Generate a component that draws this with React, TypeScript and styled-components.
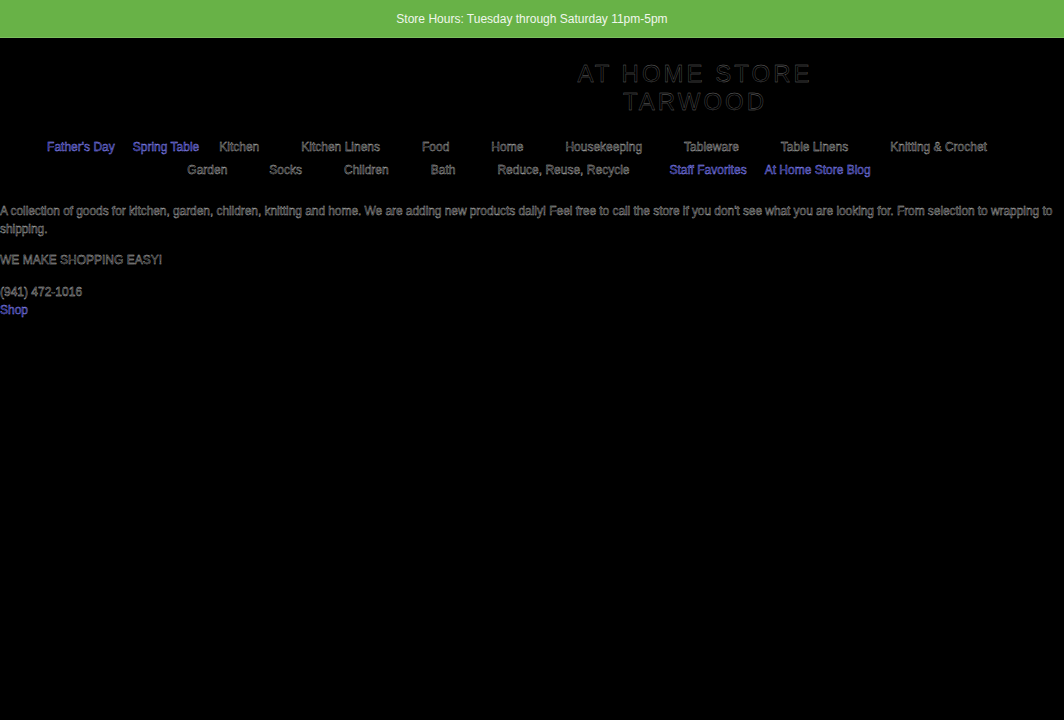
import React from 'react';
import styled, { createGlobalStyle } from 'styled-components';

interface NavItem {
  label: string;
  href: string;
  menu?: boolean;
}

const topNav: NavItem[] = [
  { label: "Father's Day", href: '#fathers-day' },
  { label: 'Spring Table', href: '#spring-table' },
  { label: 'Kitchen', href: '#kitchen', menu: true },
  { label: 'Kitchen Linens', href: '#kitchen-linens', menu: true },
  { label: 'Food', href: '#food', menu: true },
  { label: 'Home', href: '#home', menu: true },
  { label: 'Housekeeping', href: '#housekeeping', menu: true },
  { label: 'Tableware', href: '#tableware', menu: true },
  { label: 'Table Linens', href: '#table-linens', menu: true },
  { label: 'Knitting & Crochet', href: '#knitting', menu: true },
  { label: 'Garden', href: '#garden', menu: true },
  { label: 'Socks', href: '#socks', menu: true },
  { label: 'Children', href: '#children', menu: true },
  { label: 'Bath', href: '#bath', menu: true },
  { label: 'Reduce, Reuse, Recycle', href: '#recycle', menu: true },
  { label: 'Staff Favorites', href: '#staff-favorites' },
  { label: 'At Home Store Blog', href: '#blog' },
];

const GlobalStyle = createGlobalStyle`
  html, body {
    margin: 0;
    padding: 0;
    background: #000;
  }
  body {
    font-family: "Liberation Sans", Arial, sans-serif;
    font-size: 12px;
    color: #000;
    -webkit-text-stroke: 0.4px #b8b8b8;
  }
`;

export default function App() {
  return (
    <>
      <GlobalStyle />
      <Banner>Store Hours: Tuesday through Saturday 11pm-5pm</Banner>
      <Header>
        <Title>
          AT HOME STORE
          <br />
          TARWOOD
        </Title>
      </Header>
      <Nav>
        {topNav.map((item) => (
          <NavLink key={item.href} href={item.href} $menu={item.menu}>
            {item.label}
          </NavLink>
        ))}
      </Nav>
      <Content>
        <Intro>
          A collection of goods for kitchen, garden, children, knitting and home. We are adding new
          products daily! Feel free to call the store if you don't see what you are looking for.
          From selection to wrapping to shipping.
        </Intro>
        <Slogan>WE MAKE SHOPPING EASY!</Slogan>
        <Phone>(941) 472-1016</Phone>
        <ShopLink href="#shop">Shop</ShopLink>
      </Content>
    </>
  );
}

const Banner = styled.div`
  height: 37px;
  display: flex;
  align-items: center;
  justify-content: center;
  background: #68b247;
  border-bottom: 1px solid #7cbf5e;
  color: #f0f7ec;
  -webkit-text-stroke: 0;
  font-size: 12px;
`;

const Header = styled.header`
  display: flex;
  justify-content: flex-end;
  padding: 22px 0 0;
  height: 70px;
`;

const Title = styled.h1`
  margin: 0 119px 0 0;
  width: 500px;
  text-align: center;
  font-size: 24px;
  font-weight: normal;
  line-height: 28px;
  letter-spacing: 3px;
  color: #000;
  -webkit-text-stroke: 0.35px #6e6e6e;
`;

const Nav = styled.nav`
  display: flex;
  flex-wrap: wrap;
  justify-content: center;
  row-gap: 9px;
  padding: 10px 8px 0 0;
`;

const NavLink = styled.a<{ $menu?: boolean }>`
  padding: 0 ${(p) => (p.$menu ? '31px' : '9px')} 0 ${(p) => (p.$menu ? '11px' : '9px')};
  line-height: 14px;
  text-decoration: none;
  color: ${(p) => (p.$menu ? '#000' : '#14145a')};
  -webkit-text-stroke: 0.4px ${(p) => (p.$menu ? '#b8b8b8' : '#9494ff')};
`;

const Content = styled.main`
  padding: 25px 0 0;
  line-height: 18px;
`;

const Intro = styled.p`
  margin: 0 0 13px;
  letter-spacing: -0.07px;
`;

const Slogan = styled.p`
  margin: 0 0 14px;
`;

const Phone = styled.div``;

const ShopLink = styled.a`
  display: block;
  text-decoration: none;
  color: #14145a;
  -webkit-text-stroke: 0.4px #9494ff;
`;
